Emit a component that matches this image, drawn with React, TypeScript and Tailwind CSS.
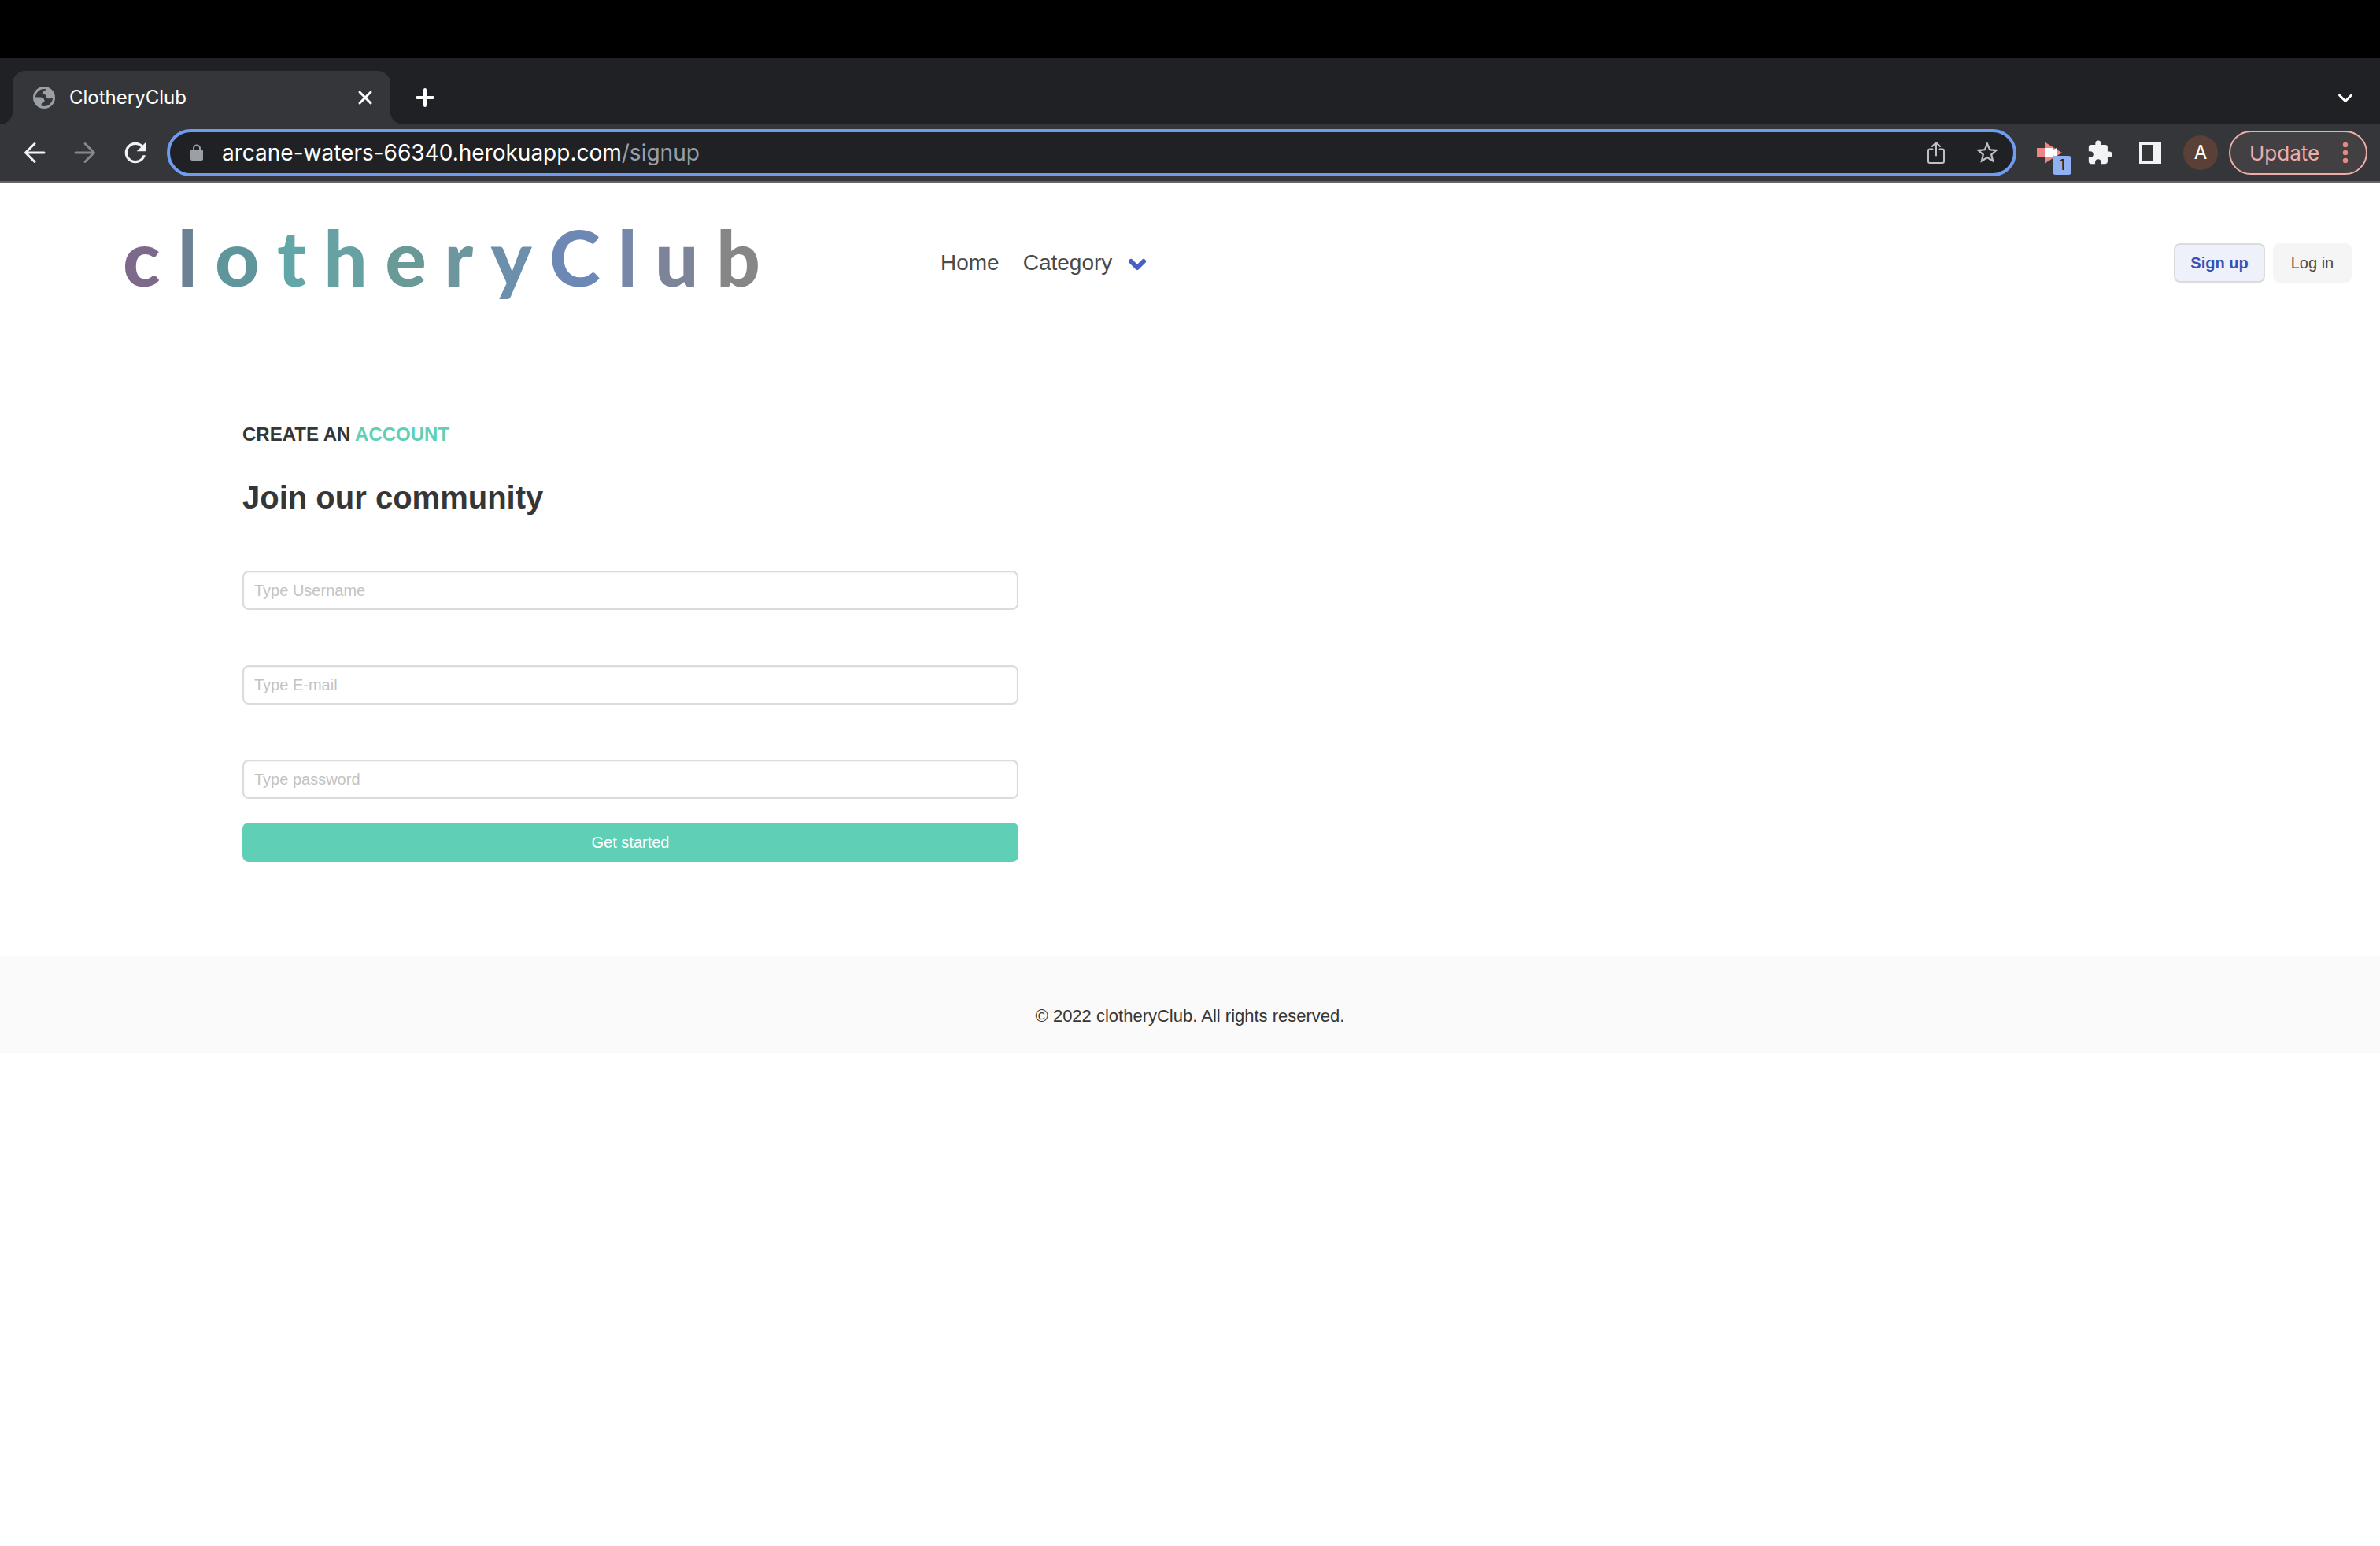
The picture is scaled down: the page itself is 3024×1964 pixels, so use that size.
import type { ReactNode } from "react";
import { MdExtension, MdRefresh, MdStarBorder } from "react-icons/md";

const logoLetters = [
  { char: "c", color: "text-[#7d6a8b]" },
  { char: "l", color: "text-[#6d8196]" },
  { char: "o", color: "text-[#5f969b]" },
  { char: "t", color: "text-[#62a6a8]" },
  { char: "h", color: "text-[#67a1a3]" },
  { char: "e", color: "text-[#6a9a98]" },
  { char: "r", color: "text-[#6e969e]" },
  { char: "y", color: "text-[#6c8fab]" },
  { char: "C", color: "text-[#6e88b6]" },
  { char: "l", color: "text-[#7787aa]" },
  { char: "u", color: "text-[#7d8499]" },
  { char: "b", color: "text-[#868686]" },
];

const fields = [
  { id: "username", type: "text", placeholder: "Type Username" },
  { id: "email", type: "email", placeholder: "Type E-mail" },
  { id: "password", type: "password", placeholder: "Type password" },
];

function Stroke({ children, width = 3 }: { children: ReactNode; width?: number }) {
  return (
    <svg
      viewBox="0 0 32 32"
      className="size-8"
      fill="none"
      stroke="currentColor"
      strokeWidth={width}
      strokeLinecap="round"
      strokeLinejoin="round"
      aria-hidden="true"
    >
      {children}
    </svg>
  );
}

function GlobeIcon() {
  return (
    <svg viewBox="0 0 28 28" className="size-7 text-[#9aa0a6]" fill="currentColor" aria-hidden="true">
      <circle cx="14" cy="14" r="12.5" fill="none" stroke="currentColor" strokeWidth="3" />
      <path d="M16 1.5C16.5 4 15.800 5.500 13.500 6C12 6.500 11.500 8 12 9.500C13 10.500 15 9.500 16 11C17 12 16 14 18 15C20.500 16 22 14.500 24 14.500L27 14L25 6L19 2Z" />
      <path d="M1.500 13.500H9C12 13.500 14 15 14.500 17.500C15 19.500 14 20.500 12 20.500C10.500 21 10.500 22.500 10.500 25.500L5 23Z" />
    </svg>
  );
}

function TabStrip() {
  return (
    <div className="flex h-[84px] items-end bg-[#202124]">
      <span className="size-4 bg-[#35363a]">
        <span className="block size-4 rounded-br-2xl bg-[#202124]" />
      </span>
      <div className="flex h-[68px] w-[480px] items-center rounded-t-2xl bg-[#35363a] pr-4 pl-[26px]">
        <GlobeIcon />
        <span className="ml-[18px] flex-1 text-2xl text-white">ClotheryClub</span>
        <button type="button" aria-label="Close tab" className="text-white">
          <Stroke>
            <path d="M9 9l14 14M23 9L9 23" />
          </Stroke>
        </button>
      </div>
      <span className="size-4 bg-[#35363a]">
        <span className="block size-4 rounded-bl-2xl bg-[#202124]" />
      </span>
      <button type="button" aria-label="New tab" className="ml-3 flex h-[68px] items-center text-white">
        <Stroke width={4}>
          <path d="M16 6v20M6 16h20" />
        </Stroke>
      </button>
      <button type="button" aria-label="Search tabs" className="mr-7 ml-auto flex h-[68px] items-center text-white">
        <Stroke>
          <path d="M8.500 13l7.500 7.500L23.500 13" />
        </Stroke>
      </button>
    </div>
  );
}

function AddressBar() {
  return (
    <div className="ml-5 flex h-[60px] flex-1 items-center rounded-full border-4 border-[#6f9bf0] bg-[#202124] pr-4 pl-[26px]">
      <svg viewBox="0 0 16 22" className="h-[22px] w-4 text-[#9aa0a6]" aria-hidden="true">
        <rect y="7" width="16" height="14" rx="2" fill="currentColor" />
        <path d="M4 8V5.500a4 4 0 0 1 8 0V8" fill="none" stroke="currentColor" strokeWidth="2" />
      </svg>
      <div
        role="textbox"
        aria-label="Address"
        contentEditable
        suppressContentEditableWarning
        spellCheck={false}
        className="ml-6 flex-1 text-[28px] leading-9 text-white outline-none"
      >
        arcane-waters-66340.herokuapp.com<span className="text-[#9aa0a6]">/signup</span>
      </div>
      <button type="button" aria-label="Share" className="text-[#bdc1c6]">
        <Stroke width={2}>
          <path d="M11.500 11.500H8a2 2 0 0 0-2 2V27a2 2 0 0 0 2 2h16a2 2 0 0 0 2-2V13.500a2 2 0 0 0-2-2h-3.500M16 19.500V3.500M11 8l5-5 5 5" />
        </Stroke>
      </button>
      <button type="button" aria-label="Bookmark this page" className="ml-8 text-[#bdc1c6]">
        <MdStarBorder className="size-[34px]" />
      </button>
    </div>
  );
}

function Toolbar() {
  return (
    <div className="flex h-[74px] items-center border-b-2 border-[#636368] bg-[#35363a] pr-4 pl-7">
      <button type="button" aria-label="Back" className="text-[#f1f3f4]">
        <Stroke>
          <path d="M28 16H5M16 4.500L4.500 16L16 27.500" />
        </Stroke>
      </button>
      <button type="button" aria-label="Forward" className="ml-8 text-[#86878a]">
        <Stroke>
          <path d="M4 16h23M16 4.500L27.500 16L16 27.500" />
        </Stroke>
      </button>
      <button type="button" aria-label="Reload" className="ml-7 text-[#f1f3f4]">
        <MdRefresh className="size-[40px]" />
      </button>
      <AddressBar />
      <button type="button" aria-label="Screen recorder, 1 notification" className="relative ml-6">
        <svg viewBox="0 0 36 32" className="h-8 w-9" aria-hidden="true">
          <path d="M12 2.500L34 16L12 29.500Z" fill="#ee8583" />
          <path d="M2 10h10v12H2Z" fill="#ee8583" />
          <path d="M12 10h10v12H12Z" fill="#ffffff" />
          <path d="M21 14l6-4v12l-6-4Z" fill="#ffffff" />
        </svg>
        <span className="absolute top-5 left-[22px] flex size-6 items-center justify-center rounded bg-[#8fb0f3] text-lg leading-6 text-[#202124]">
          1
        </span>
      </button>
      <button type="button" aria-label="Extensions" className="ml-[29px] text-[#f1f3f4]">
        <MdExtension className="size-[34px]" />
      </button>
      <button type="button" aria-label="Side panel" className="ml-[33px] text-[#f1f3f4]">
        <svg viewBox="0 0 28 28" className="size-7" fill="currentColor" aria-hidden="true">
          <path fillRule="evenodd" d="M0 0h28v28H0ZM4 4v20h14V4Z" />
        </svg>
      </button>
      <button
        type="button"
        aria-label="Profile"
        className="ml-7 flex size-11 items-center justify-center rounded-full bg-[#5a4037] text-2xl text-white"
      >
        A
      </button>
      <button
        type="button"
        className="ml-3.5 flex h-14 w-44 items-center justify-between rounded-full border-2 border-[#eeaea8] bg-[#434044] pr-[22px] pl-6 text-[26px] text-[#eeaea8]"
      >
        Update
        <svg viewBox="0 0 8 28" className="h-7 w-2" fill="#e78b80" aria-hidden="true">
          <circle cx="4" cy="4" r="3.200" />
          <circle cx="4" cy="14" r="3.200" />
          <circle cx="4" cy="24" r="3.200" />
        </svg>
      </button>
    </div>
  );
}

function Navbar() {
  return (
    <nav className="flex h-[204px] items-center pr-9 pl-[156px] text-[#4a4a4a]">
      <a
        href="#"
        aria-label="clotheryClub"
        className="flex w-[810px] justify-between pb-4 font-['Lato'] text-[98px] leading-[120px] font-black"
      >
        {logoLetters.map((letter, index) => (
          <span key={index} className={letter.color}>
            {letter.char}
          </span>
        ))}
      </a>
      <div className="ml-[229px] flex items-center text-[28px] leading-10">
        <a href="#">Home</a>
        <a href="#" className="ml-[30px] flex items-center gap-4">
          Category
          <svg viewBox="0 0 32 32" className="size-8 text-[#4a5fc4]" fill="none" stroke="currentColor" strokeWidth="6" strokeLinecap="round" strokeLinejoin="round" aria-hidden="true">
            <path d="M8 14l8 8 8-8" />
          </svg>
        </a>
      </div>
      <div className="ml-auto flex gap-2.5 text-xl">
        <a
          href="#"
          className="flex h-[50px] w-[116px] items-center justify-center rounded-lg border-2 border-[#dbdbdb] bg-[#eff1fa] font-bold text-[#3850b7]"
        >
          Sign up
        </a>
        <a href="#" className="flex h-[50px] w-[100px] items-center justify-center rounded-lg bg-[#f5f5f5]">
          Log in
        </a>
      </div>
    </nav>
  );
}

function SignupForm() {
  return (
    <main className="px-[308px] pt-24 pb-[120px] text-[#363636]">
      <h2 className="text-2xl leading-10 font-bold">
        CREATE AN <span className="text-[#5fcfb5]">ACCOUNT</span>
      </h2>
      <h1 className="mt-8 text-[40px] leading-[56px] font-bold">Join our community</h1>
      <form className="mt-[65px] flex max-w-[986px] flex-col" onSubmit={(event) => event.preventDefault()}>
        <div className="flex flex-col gap-[70px]">
          {fields.map((field) => (
            <input
              key={field.id}
              id={field.id}
              type={field.type}
              aria-label={field.placeholder}
              placeholder={field.placeholder}
              className="h-[50px] rounded-lg border-2 border-[#dbdbdb] px-[13px] text-xl shadow-[inset_0_1px_2px_rgba(10,10,10,0.05)] placeholder:text-[#c3c3c3]"
            />
          ))}
        </div>
        <button type="submit" className="mt-[30px] h-[50px] rounded-lg bg-[#5fcfb5] text-xl text-white">
          Get started
        </button>
      </form>
    </main>
  );
}

export default function App() {
  return (
    <div className="min-h-screen bg-white">
      <header className="bg-black pt-[74px] font-['Inter',sans-serif]">
        <TabStrip />
        <Toolbar />
      </header>
      <div className="font-['Liberation_Sans',sans-serif]">
        <Navbar />
        <SignupForm />
        <footer className="bg-[#fafafa] pt-[60px] pb-[31px] text-center text-[22px] leading-8 text-[#363636]">
          © 2022 clotheryClub. All rights reserved.
        </footer>
      </div>
    </div>
  );
}
